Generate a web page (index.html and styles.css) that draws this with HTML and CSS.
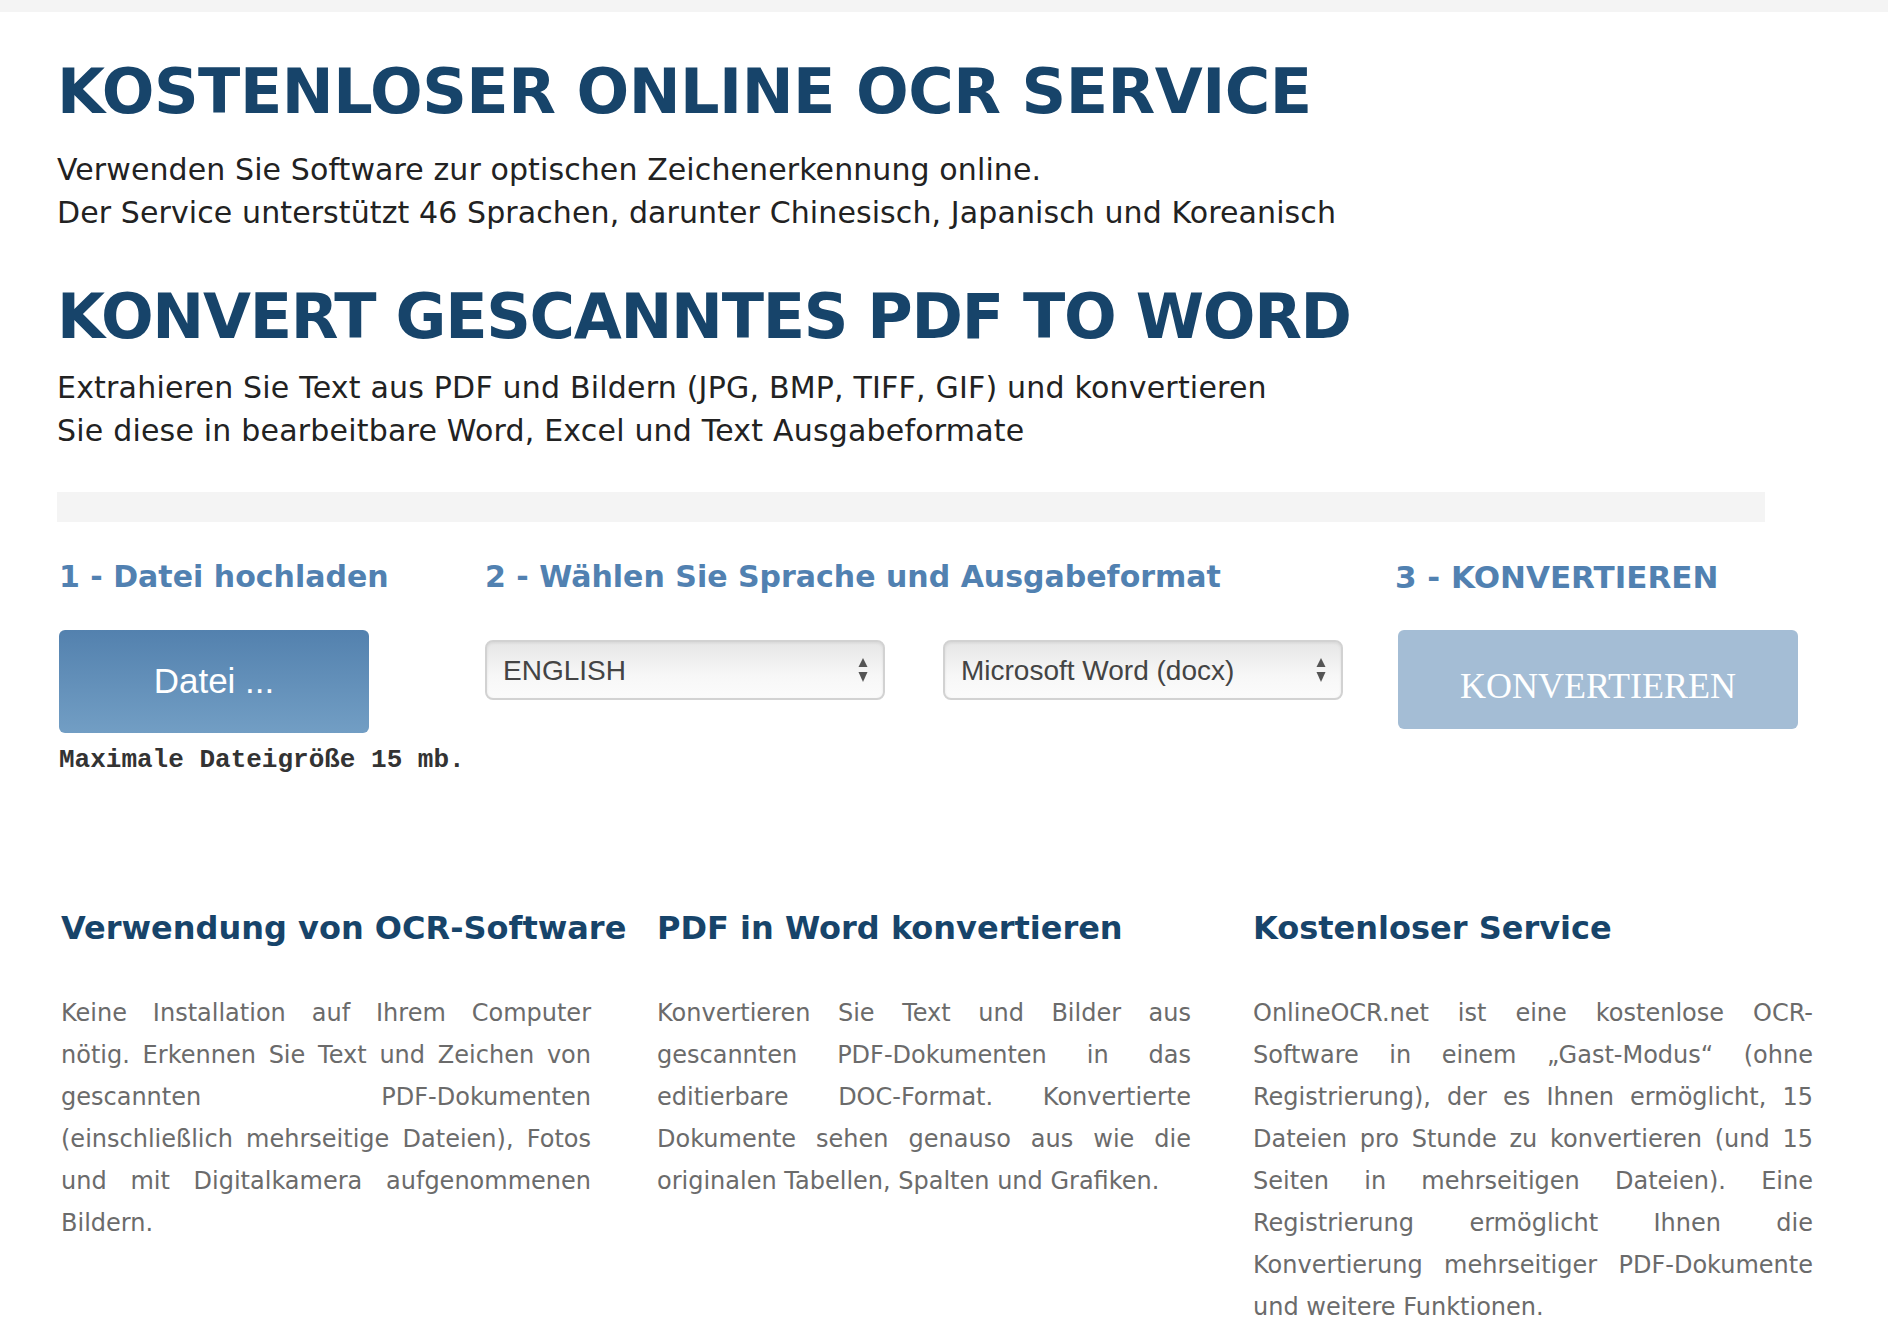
FILE: index.html
```html
<!DOCTYPE html>
<html lang="de">
<head>
<meta charset="utf-8">
<title>Kostenloser Online OCR Service</title>
<link rel="stylesheet" href="styles.css">
</head>
<body>
<div class="topbar"></div>
<main class="page">
  <h1 class="title title-1">KOSTENLOSER ONLINE OCR SERVICE</h1>
  <p class="lead lead-1">Verwenden Sie Software zur optischen Zeichenerkennung online.<br>Der Service unterstützt 46 Sprachen, darunter Chinesisch, Japanisch und Koreanisch</p>
  <h1 class="title title-2">KONVERT GESCANNTES PDF TO WORD</h1>
  <p class="lead lead-2">Extrahieren Sie Text aus PDF und Bildern (JPG, BMP, TIFF, GIF) und konvertieren<br>Sie diese in bearbeitbare Word, Excel und Text Ausgabeformate</p>
  <div class="divider"></div>

  <section class="steps">
    <div class="step step-upload">
      <h3 class="step-title">1 - Datei hochladen</h3>
      <div class="btn-file">Datei ...</div>
      <div class="maxsize">Maximale Dateigröße 15 mb.</div>
    </div>
    <div class="step step-options">
      <h3 class="step-title">2 - Wählen Sie Sprache und Ausgabeformat</h3>
      <div class="selects">
        <div class="select">
          <span class="select-text">ENGLISH</span>
          <svg class="select-arrow" width="10" height="26" viewBox="0 0 10 26"><path d="M5 0 L9.5 9 L0.5 9 Z" fill="#555"/><path d="M0.5 14 L9.5 14 L5 24 Z" fill="#555"/></svg>
        </div>
        <div class="select">
          <span class="select-text">Microsoft Word (docx)</span>
          <svg class="select-arrow" width="10" height="26" viewBox="0 0 10 26"><path d="M5 0 L9.5 9 L0.5 9 Z" fill="#555"/><path d="M0.5 14 L9.5 14 L5 24 Z" fill="#555"/></svg>
        </div>
      </div>
    </div>
    <div class="step step-convert">
      <h3 class="step-title step-title-wide">3 - KONVERTIEREN</h3>
      <button class="btn-convert" type="button">KONVERTIEREN</button>
    </div>
  </section>

  <section class="features">
    <div class="feature">
      <h2 class="feature-title">Verwendung von OCR-Software</h2>
      <p class="feature-text feature-text-narrow">Keine Installation auf Ihrem Computer nötig. Erkennen Sie Text und Zeichen von gescannten PDF-Dokumenten (einschließlich mehrseitige Dateien), Fotos und mit Digitalkamera aufgenommenen Bildern.</p>
    </div>
    <div class="feature">
      <h2 class="feature-title">PDF in Word konvertieren</h2>
      <p class="feature-text">Konvertieren Sie Text und Bilder aus gescannten PDF-Dokumenten in das editierbare DOC-Format. Konvertierte Dokumente sehen genauso aus wie die originalen Tabellen, Spalten und Grafiken.</p>
    </div>
    <div class="feature">
      <h2 class="feature-title">Kostenloser Service</h2>
      <p class="feature-text">OnlineOCR.net ist eine kostenlose OCR-Software in einem „Gast-Modus“ (ohne Registrierung), der es Ihnen ermöglicht, 15 Dateien pro Stunde zu konvertieren (und 15 Seiten in mehrseitigen Dateien). Eine Registrierung ermöglicht Ihnen die Konvertierung mehrseitiger PDF-Dokumente und weitere Funktionen.</p>
    </div>
  </section>
</main>
</body>
</html>
```

FILE: styles.css
```css
html, body {
  margin: 0;
  padding: 0;
  background: #ffffff;
}

body {
  font-family: "DejaVu Sans", Verdana, sans-serif;
  color: #222222;
}

.topbar {
  height: 12px;
  background: #f4f4f4;
}

.page {
  padding: 0 0 40px 57px;
}

.title {
  margin: 44px 0 0 0;
  font-size: 62px;
  line-height: 72px;
  font-weight: bold;
  color: #17446a;
  letter-spacing: -0.5px;
}

.title-2 {
  margin-top: 47px;
  letter-spacing: -1.3px;
}

.lead {
  margin: 21px 0 0 0;
  font-size: 30px;
  line-height: 42.5px;
  color: #222222;
  letter-spacing: 0.1px;
}

.lead-2 {
  margin-top: 14px;
  letter-spacing: 0.2px;
}

.divider {
  margin-top: 40px;
  width: 1708px;
  height: 30px;
  background: #f4f4f4;
}

.steps {
  display: flex;
  margin-top: 37px;
  padding-left: 2px;
}

.step-title {
  margin: 0;
  font-size: 30px;
  line-height: 36px;
  font-weight: bold;
  color: #5181b1;
  white-space: nowrap;
}

.step-title-wide {
  font-size: 31px;
}

.step-upload {
  width: 426px;
}

.step-options {
  width: 910px;
}

.btn-file {
  margin-top: 35px;
  width: 310px;
  height: 103px;
  border-radius: 6px;
  background: linear-gradient(to bottom, #5381ae 0%, #729ec4 100%);
  color: #ffffff;
  font-family: "Liberation Sans", Arial, sans-serif;
  font-size: 35px;
  display: flex;
  align-items: center;
  justify-content: center;
  box-sizing: border-box;
  padding-bottom: 2px;
}

.maxsize {
  margin-top: 12px;
  font-family: "Liberation Mono", "Courier New", monospace;
  font-weight: bold;
  font-size: 26px;
  line-height: 30px;
  color: #333333;
  white-space: nowrap;
}

.selects {
  display: flex;
  gap: 58px;
  margin-top: 45px;
}

.select {
  box-sizing: border-box;
  width: 400px;
  height: 60px;
  border: 2px solid #d2d2d2;
  border-radius: 8px;
  background: linear-gradient(to bottom, #e6e6e6 0%, #f7f7f7 60%, #fbfbfb 100%);
  box-shadow: inset 0 1px 3px rgba(0, 0, 0, 0.08);
  display: flex;
  align-items: center;
  justify-content: space-between;
  padding: 0 15px 0 16px;
  font-family: "Liberation Sans", Arial, sans-serif;
  font-size: 28px;
  color: #444444;
}

.select-text {
  padding-top: 1px;
}

.select-arrow {
  display: block;
  margin-top: 2px;
}

.step-convert {
  display: flex;
  flex-direction: column;
}

.btn-convert {
  margin: 35px 0 0 3px;
  width: 400px;
  height: 99px;
  border: none;
  border-radius: 6px;
  background: #a4bdd5;
  color: #ffffff;
  font-family: "Liberation Serif", "Times New Roman", serif;
  font-size: 36px;
  padding: 12px 0 0 0;
  text-align: center;
}

.features {
  display: grid;
  grid-template-columns: 534px 534px 560px;
  column-gap: 62px;
  margin-top: 135px;
  padding-left: 4px;
}

.feature-title {
  margin: 0;
  font-size: 32px;
  line-height: 36px;
  font-weight: bold;
  color: #17446a;
  white-space: nowrap;
}

.feature-text {
  margin: 46px 0 0 0;
  font-size: 24px;
  line-height: 42px;
  color: #6b6b6b;
  text-align: justify;
}

.feature-text-narrow {
  margin-right: 4px;
}
```
